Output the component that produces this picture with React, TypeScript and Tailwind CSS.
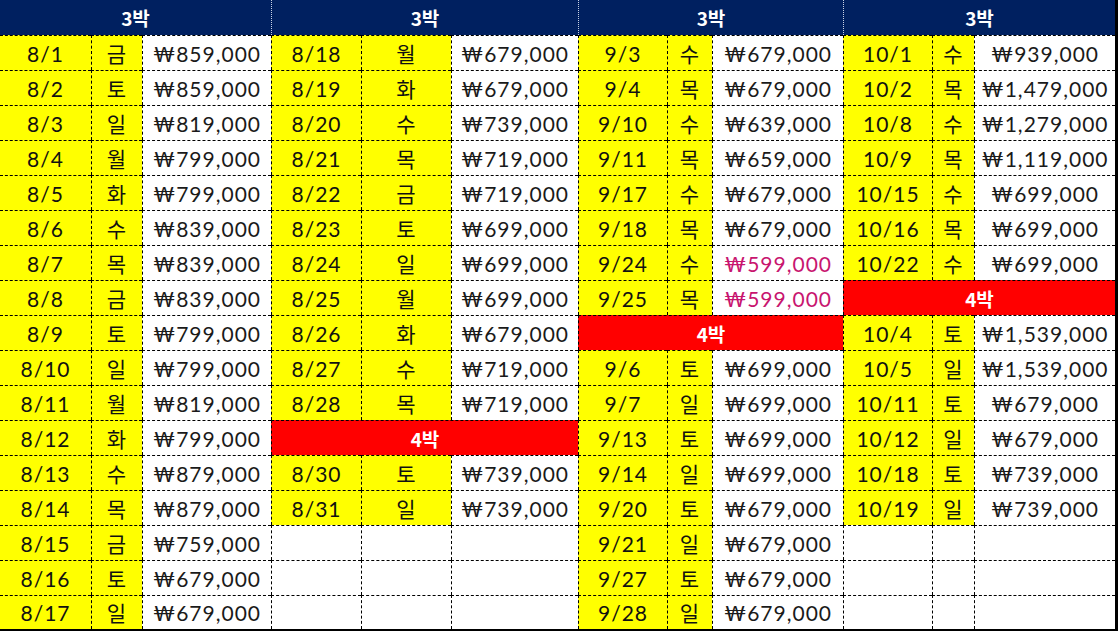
import React from "react";

type Entry = { d: string; w: string; p: string; pink?: boolean } | "red" | null;

const e = (d: string, w: string, p: string, pink?: boolean): Entry => ({ d, w, p, pink });

const groups: Entry[][] = [
  [
    e("8/1", "금", "₩859,000"),
    e("8/2", "토", "₩859,000"),
    e("8/3", "일", "₩819,000"),
    e("8/4", "월", "₩799,000"),
    e("8/5", "화", "₩799,000"),
    e("8/6", "수", "₩839,000"),
    e("8/7", "목", "₩839,000"),
    e("8/8", "금", "₩839,000"),
    e("8/9", "토", "₩799,000"),
    e("8/10", "일", "₩799,000"),
    e("8/11", "월", "₩819,000"),
    e("8/12", "화", "₩799,000"),
    e("8/13", "수", "₩879,000"),
    e("8/14", "목", "₩879,000"),
    e("8/15", "금", "₩759,000"),
    e("8/16", "토", "₩679,000"),
    e("8/17", "일", "₩679,000"),
  ],
  [
    e("8/18", "월", "₩679,000"),
    e("8/19", "화", "₩679,000"),
    e("8/20", "수", "₩739,000"),
    e("8/21", "목", "₩719,000"),
    e("8/22", "금", "₩719,000"),
    e("8/23", "토", "₩699,000"),
    e("8/24", "일", "₩699,000"),
    e("8/25", "월", "₩699,000"),
    e("8/26", "화", "₩679,000"),
    e("8/27", "수", "₩719,000"),
    e("8/28", "목", "₩719,000"),
    "red",
    e("8/30", "토", "₩739,000"),
    e("8/31", "일", "₩739,000"),
    null,
    null,
    null,
  ],
  [
    e("9/3", "수", "₩679,000"),
    e("9/4", "목", "₩679,000"),
    e("9/10", "수", "₩639,000"),
    e("9/11", "목", "₩659,000"),
    e("9/17", "수", "₩679,000"),
    e("9/18", "목", "₩679,000"),
    e("9/24", "수", "₩599,000", true),
    e("9/25", "목", "₩599,000", true),
    "red",
    e("9/6", "토", "₩699,000"),
    e("9/7", "일", "₩699,000"),
    e("9/13", "토", "₩699,000"),
    e("9/14", "일", "₩699,000"),
    e("9/20", "토", "₩679,000"),
    e("9/21", "일", "₩679,000"),
    e("9/27", "토", "₩679,000"),
    e("9/28", "일", "₩679,000"),
  ],
  [
    e("10/1", "수", "₩939,000"),
    e("10/2", "목", "₩1,479,000"),
    e("10/8", "수", "₩1,279,000"),
    e("10/9", "목", "₩1,119,000"),
    e("10/15", "수", "₩699,000"),
    e("10/16", "목", "₩699,000"),
    e("10/22", "수", "₩699,000"),
    "red",
    e("10/4", "토", "₩1,539,000"),
    e("10/5", "일", "₩1,539,000"),
    e("10/11", "토", "₩679,000"),
    e("10/12", "일", "₩679,000"),
    e("10/18", "토", "₩739,000"),
    e("10/19", "일", "₩739,000"),
    null,
    null,
    null,
  ],
];

const base = "flex items-center justify-center border-t border-dashed border-black";

export default function App() {
  const cells: React.ReactNode[] = [];
  groups.forEach((_, g) => {
    cells.push(
      <div
        key={`h${g}`}
        className={`col-span-3 flex items-center justify-center bg-[#002060] text-white font-bold text-[19px] tracking-normal font-['Noto_Sans_CJK_KR',sans-serif] ${
          g > 0 ? "border-l border-dotted border-[#c9d2e6]" : ""
        }`}
      >
        3박
      </div>
    );
  });
  for (let r = 0; r < 17; r++) {
    groups.forEach((grp, g) => {
      const en = grp[r];
      const lb = g > 0 ? "border-l" : "";
      if (en === "red") {
        cells.push(
          <div
            key={`${r}-${g}`}
            className={`${base} ${lb} col-span-3 bg-[#ff0000] text-white font-bold text-[19px] tracking-normal font-['Noto_Sans_CJK_KR',sans-serif]`}
          >
            4박
          </div>
        );
      } else if (en === null) {
        cells.push(<div key={`${r}-${g}a`} className={`${base} ${lb} bg-white`} />);
        cells.push(<div key={`${r}-${g}b`} className={`${base} border-l bg-white`} />);
        cells.push(<div key={`${r}-${g}c`} className={`${base} border-l bg-white`} />);
      } else {
        cells.push(
          <div key={`${r}-${g}a`} className={`${base} ${lb} bg-[#ffff00] text-[#111]`}>
            {en.d}
          </div>
        );
        cells.push(
          <div key={`${r}-${g}b`} className={`${base} border-l bg-[#ffff00] text-[#111]`}>
            {en.w}
          </div>
        );
        cells.push(
          <div
            key={`${r}-${g}c`}
            className={`${base} border-l bg-white ${en.pink ? "text-[#c8156f]" : "text-[#1a1a1a]"}`}
          >
            {en.p}
          </div>
        );
      }
    });
  }
  return (
    <div className="w-[1118px] h-[631px] bg-white border-r-[3px] border-b-2 border-black box-border overflow-hidden">
      <div className="grid grid-cols-[91px_51px_129px_90px_90px_127px_89px_45px_131px_89px_42px_141px] grid-rows-[repeat(17,35px)_34px] font-[Lato,'Noto_Sans_CJK_KR',sans-serif] text-[21px] tracking-[1px] leading-none">
        {cells}
      </div>
    </div>
  );
}
